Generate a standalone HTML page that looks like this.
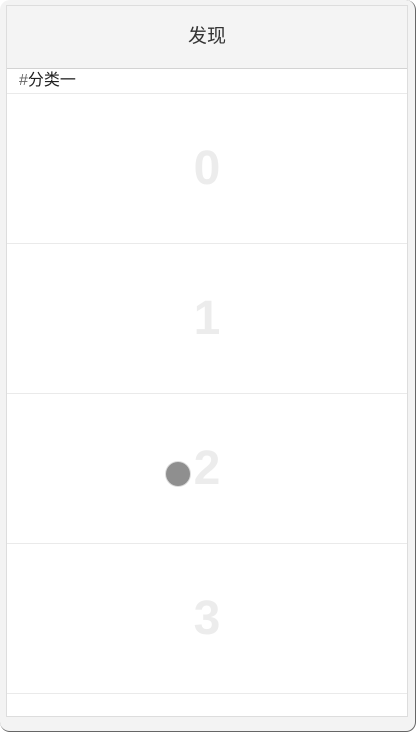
<!DOCTYPE html>
<html><head><meta charset="utf-8"><style>
html,body{margin:0;padding:0;width:417px;height:733px;background:#fff;overflow:hidden;font-family:"Liberation Sans","Noto Sans CJK SC",sans-serif}
.frame{position:absolute;left:0;top:0;width:416px;height:732px;background:#f3f3f3;border-radius:10px;border-right:1px solid #666;border-bottom:1px solid #666;box-sizing:border-box}
.box{position:absolute;left:6px;top:5px;width:402px;height:712px;background:#fff;border:1px solid #ddd;box-sizing:border-box}
.hd{height:62px;background:#f4f4f4;border-bottom:1px solid #d3d3d3;text-align:center;line-height:61px;font-size:19px;color:#333}
.cat{height:24px;border-bottom:1px solid #eaeaea;font-size:16px;line-height:24px;padding-left:12px;color:#222}
.cat span{color:#666}
.row{height:149px;border-bottom:1px solid #eaeaea;text-align:center;line-height:149px;font-size:48px;font-weight:bold;color:#ececec}
.ball{position:absolute;left:166px;top:462px;width:24px;height:24px;border-radius:50%;background:#8f8f8f;box-shadow:0 0 0 1px #ddd}
</style></head><body>
<div class="frame"></div>
<div class="box">
<div class="hd">发现</div>
<div class="cat"><span>#</span>分类一</div>
<div class="row">0</div>
<div class="row">1</div>
<div class="row">2</div>
<div class="row">3</div>
</div>
<div class="ball"></div>
</body></html>
